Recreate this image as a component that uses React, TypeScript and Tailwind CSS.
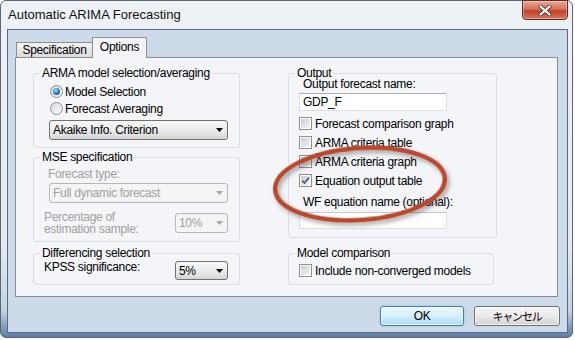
import React from 'react';

function Arrow({ disabled }: { disabled?: boolean }) {
  return (
    <svg width="7" height="4" viewBox="0 0 7 4">
      <path d="M0 0h7L3.5 4z" fill={disabled ? '#a6a6a6' : '#000'} />
    </svg>
  );
}

function Select({ value, className, disabled }: { value: string; className?: string; disabled?: boolean }) {
  return (
    <div
      className={`flex items-center justify-between rounded-[3px] border pl-[3px] pr-[4px] ${
        disabled
          ? 'border-[#b4b8bc] bg-[#f4f4f4] text-[#a0a0a0]'
          : 'border-[#707070] bg-gradient-to-b from-[#f7f7f7] via-[#ececec] to-[#d6d6d6] text-black'
      } ${className ?? ''}`}
    >
      <span>{value}</span>
      <Arrow disabled={disabled} />
    </div>
  );
}

function Group({ title, className, children }: { title: string; className?: string; children?: React.ReactNode }) {
  return (
    <fieldset className={`rounded-[3px] border border-[#d5dfe5] ${className ?? ''}`}>
      <legend className="ml-[6px] px-[2px] leading-[12px]">{title}</legend>
      {children}
    </fieldset>
  );
}

function Radio({ checked, label }: { checked?: boolean; label: string }) {
  return (
    <div className="flex h-[17px] items-center gap-[2px] pl-px">
      <span className="flex h-[13px] w-[13px] items-center justify-center rounded-full border border-[#8b9097] bg-gradient-to-br from-[#d6d8db] to-[#fbfbfb]">
        {checked && (
          <span className="h-[7px] w-[7px] rounded-full bg-[radial-gradient(circle_at_40%_35%,#a6e4ff,#2476bb_55%,#0c3a69)]" />
        )}
      </span>
      <span>{label}</span>
    </div>
  );
}

function Check({ checked, label }: { checked?: boolean; label: string }) {
  return (
    <div className="flex h-[19px] items-center gap-[3px]">
      <span className="flex h-[13px] w-[13px] border border-[#8e8f8f] bg-white p-px">
        <span className="flex h-full w-full items-center justify-center bg-gradient-to-br from-[#c9ccd2] to-[#f5f5f5]">
          {checked && (
            <svg width="9" height="9" viewBox="0 0 9 9">
              <path d="M1.2 4.6 L3.5 7 L7.8 1.6" fill="none" stroke="#4a5a99" strokeWidth="1.7" />
            </svg>
          )}
        </span>
      </span>
      <span>{label}</span>
    </div>
  );
}

export default function App() {
  return (
    <div className="relative h-[340px] w-[575px] overflow-hidden bg-white font-['Liberation_Sans',Arial,sans-serif] text-[12px] tracking-[-0.3px] text-black">
      <div className="flex h-[338px] w-[573px] flex-col rounded-[6px] border border-[#5c6674] bg-[linear-gradient(180deg,#eef2f6_0%,#e5eaf0_72%,#c6d3e3_92%,#5c7ca7_100%)]">
        {/* Title bar */}
        <div className="flex h-[28px] justify-between">
          <span className="self-center pl-[7px] text-[13px] tracking-normal text-[#111]">
            Automatic ARIMA Forecasting
          </span>
          <div className="-mt-px mr-[4px] flex h-[20px] w-[46px] items-center justify-center rounded-b-[4px] border border-[#5b2a22] bg-[linear-gradient(180deg,#e9a897_0%,#d6735c_45%,#c24129_55%,#d8785f_100%)] shadow-[inset_0_0_0_1px_rgba(255,255,255,0.35)]">
            <svg width="14" height="11" viewBox="0 0 14 11">
              <path d="M2.5 1.5 L11.5 9.5 M11.5 1.5 L2.5 9.5" stroke="#5a3a35" strokeWidth="4" strokeLinecap="round" />
              <path d="M2.5 1.5 L11.5 9.5 M11.5 1.5 L2.5 9.5" stroke="#fff" strokeWidth="2.2" strokeLinecap="round" />
            </svg>
          </div>
        </div>

        {/* Client area */}
        <div className="ml-[6px] flex h-[304px] w-[561px] flex-col border border-[#5a6a80] bg-[#cddaea]">
          {/* Tabs */}
          <div className="relative z-10 -mb-px ml-[8px] mt-[7px] flex h-[21px] items-end">
            <div className="mb-px flex h-[15px] w-[77px] items-center justify-center border border-b-0 border-[#8e8f8f] bg-gradient-to-b from-[#f3f3f3] to-[#dcdcdc] leading-[14px]">
              Specification
            </div>
            <div className="-ml-px flex h-[21px] w-[55px] items-start justify-center border border-b-0 border-[#8e8f8f] bg-[#f3f5f8] pt-[2px] leading-[14px]">
              Options
            </div>
          </div>

          {/* Panel */}
          <div className="ml-[7px] h-[240px] w-[543px] border border-[#898c95] bg-[#f3f5f8]">
            <div className="grid grid-cols-[207px_209px] gap-x-[48px] pl-[17px] pt-[9px]">
              {/* Left column */}
              <div className="flex flex-col">
                <Group title="ARMA model selection/averaging" className="h-[81px]">
                  <div className="pl-[15px] pt-[4px]">
                    <Radio checked label="Model Selection" />
                    <Radio label="Forecast Averaging" />
                    <Select className="mt-[3px] h-[20px] w-[179px]" value="Akaike Info. Criterion" />
                  </div>
                </Group>

                <Group title="MSE specification" className="mt-[3px] h-[91px]">
                  <div className="pl-[14px] pt-[4px] leading-[14px] text-[#a0a0a0]">Forecast type:</div>
                  <Select className="ml-[15px] mt-[2px] h-[20px] w-[179px]" disabled value="Full dynamic forecast" />
                  <div className="mt-[8px] flex items-start justify-between pl-[10px] pr-[11px]">
                    <div className="text-[#a0a0a0]">
                      <div className="leading-[12px]">Percentage of</div>
                      <div className="leading-[12px]">estimation sample:</div>
                    </div>
                    <Select className="mt-[2px] h-[20px] w-[53px]" disabled value="10%" />
                  </div>
                </Group>

                <Group title="Differencing selection" className="mt-[5px] h-[38px]">
                  <div className="flex items-start justify-between pl-[10px] pr-[11px] pt-px">
                    <span className="leading-[14px]">KPSS significance:</span>
                    <Select className="mt-px h-[19px] w-[53px]" value="5%" />
                  </div>
                </Group>
              </div>

              {/* Right column */}
              <div className="flex flex-col">
                <Group title="Output" className="h-[171px] w-[209px]">
                  <div className="pl-[14px] leading-[11px]">Output forecast name:</div>
                  <div className="ml-[10px] mt-[3px] h-[18px] w-[148px] border border-[#dbdfe6] border-t-[#abadb3] bg-white pl-[3px] leading-[16px]">
                    GDP_F
                  </div>
                  <div className="ml-[10px] mt-[3px]">
                    <Check label="Forecast comparison graph" />
                    <Check label="ARMA criteria table" />
                    <Check label="ARMA criteria graph" />
                    <Check checked label="Equation output table" />
                  </div>
                  <div className="mt-[5px] pl-[14px] leading-[14px]">WF equation name (optional):</div>
                  <div className="ml-[10px] mt-[3px] h-[17px] w-[148px] border border-[#dbdfe6] border-t-[#c5c8ce] bg-white" />
                </Group>

                <Group title="Model comparison" className="mt-[9px] h-[38px] w-[206px]">
                  <div className="ml-[10px] mt-[2px]">
                    <Check label="Include non-converged models" />
                  </div>
                </Group>
              </div>
            </div>
          </div>

          {/* Buttons */}
          <div className="mt-[9px] flex justify-end gap-[10px] pr-[7px]">
            <div className="flex h-[20px] w-[84px] items-center justify-center rounded-[3px] border border-[#3c7fb1] bg-gradient-to-b from-[#edf8fe] via-[#d6eefc] to-[#a9daf6] shadow-[inset_0_0_0_1px_rgba(255,255,255,0.75),0_0_2px_#7ec4ef]">
              OK
            </div>
            <div className="flex h-[20px] w-[86px] items-center justify-center rounded-[3px] border border-[#707070] bg-gradient-to-b from-[#f4f4f4] via-[#ebebeb] to-[#d2d2d2] font-['Noto_Sans_CJK_JP',sans-serif] text-[11px] tracking-[-1.2px] shadow-[inset_0_0_0_1px_rgba(255,255,255,0.7)]">
              キャンセル
            </div>
          </div>
        </div>
      </div>

      {/* Red annotation ellipse */}
      <svg className="pointer-events-none absolute left-0 top-0" width="575" height="340" viewBox="0 0 575 340">
        <defs>
          <filter id="sh" x="-20%" y="-30%" width="140%" height="160%">
            <feDropShadow dx="2" dy="3" stdDeviation="2" floodColor="#000" floodOpacity="0.35" />
          </filter>
        </defs>
        <ellipse
          cx="360"
          cy="184"
          rx="85"
          ry="36"
          transform="rotate(-4 360 184)"
          fill="none"
          stroke="#b9492e"
          strokeWidth="4.5"
          filter="url(#sh)"
        />
      </svg>
    </div>
  );
}
